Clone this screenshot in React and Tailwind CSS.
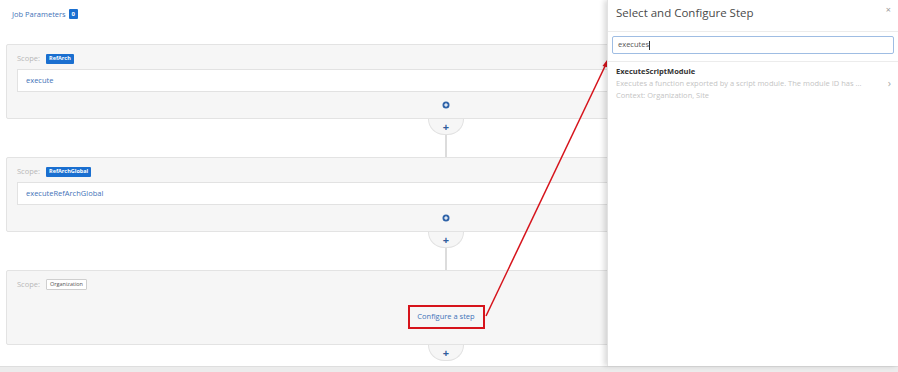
import React from "react";

const font = { fontFamily: '"Open Sans", "Noto Sans", sans-serif' };

function CirclePlus() {
  return (
    <svg width="8" height="8" viewBox="0 0 8 8">
      <circle cx="4" cy="4" r="3.5" fill="#2f63a8" />
      <rect x="2.2" y="3.4" width="3.6" height="1.2" fill="#fff" />
      <rect x="3.4" y="2.2" width="1.2" height="3.6" fill="#fff" />
    </svg>
  );
}

function Tab() {
  return (
    <div className="flex flex-col items-center">
      <div className="w-[36px] h-[16px] rounded-b-[18px] bg-[#f6f6f6] border border-t-0 border-[#e2e2e2] flex items-start justify-center pt-[3px] text-[#2f5d9c] text-[11px] leading-[10px] font-bold">
        +
      </div>
    </div>
  );
}

function Line() {
  return <div className="mx-auto w-[2px] h-[22px] bg-[#dcdcdc]" />;
}

function Card({ scope, outlined, step }) {
  return (
    <div className="h-[75px] bg-[#f6f6f6] border border-[#e3e3e3] rounded-[2px] px-[10px] pt-[8px] flex flex-col">
      <div className="flex items-center gap-[6px] h-[11px]">
        <span className="text-[7.5px] text-[#b8b8b8]">Scope:</span>
        {outlined ? (
          <span className="h-[11px] px-[3px] bg-white border border-[#cfcfcf] rounded-[1px] text-[5.5px] text-[#555] flex items-center">
            {scope}
          </span>
        ) : (
          <span className="h-[10px] px-[3px] bg-[#1a6fd0] rounded-[1px] text-[5.5px] font-bold text-white flex items-center">
            {scope}
          </span>
        )}
      </div>
      {step ? (
        <>
          <div className="mt-[5px] h-[23px] bg-white border border-[#e2e2e2] flex items-center pl-[8px] text-[7.5px] text-[#3f73b8]">
            {step}
          </div>
          <div className="flex-1 flex items-center justify-center">
            <CirclePlus />
          </div>
        </>
      ) : (
        <div className="flex-1 flex items-center justify-center">
          <div className="border-2 border-[#d6131b] w-[77px] h-[24px] flex items-center justify-center text-[7.5px] text-[#3f73b8]">
            Configure a step
          </div>
        </div>
      )}
    </div>
  );
}

export default function App() {
  return (
    <div className="relative w-[898px] h-[372px] bg-white overflow-hidden" style={font}>
      <div className="w-[880px] pl-[6px] box-content">
        <div className="h-[44px] pl-[6px] pt-[9px] flex items-start gap-[3px]">
          <span className="text-[7.5px] text-[#3f73b8] leading-[10px]">Job Parameters</span>
          <span className="w-[9px] h-[10px] bg-[#1a6fd0] rounded-[1px] text-white text-[6px] font-bold flex items-center justify-center">
            0
          </span>
        </div>
        <Card scope="RefArch" step="execute" />
        <Tab />
        <Line />
        <Card scope="RefArchGlobal" step="executeRefArchGlobal" />
        <Tab />
        <Line />
        <Card scope="Organization" outlined />
        <Tab />
      </div>
      <div className="absolute left-0 right-0 bottom-0 h-[6px] bg-[#ececec] border-t border-[#dedede]" />

      <svg className="absolute left-0 top-0 pointer-events-none" width="898" height="372">
        <line x1="486" y1="316" x2="607" y2="62" stroke="#d6131b" strokeWidth="1.5" />
        <polygon points="610,56 602.5,66 610,68" fill="#d6131b" />
      </svg>

      <div className="absolute right-0 top-0 w-[291px] h-[366px] bg-white shadow-[-3px_0_5px_rgba(0,0,0,0.14)] border-l border-[#e2e2e2] flex flex-col">
        <div className="h-[32px] flex items-start justify-between pl-[8px] pr-[7px] pt-[4px] border-b border-[#ececec]">
          <span className="text-[11.5px] text-[#4a4a4a] leading-[18px]">Select and Configure Step</span>
          <span className="text-[9px] text-[#9a9a9a] leading-[12px]">×</span>
        </div>
        <div className="px-[4px] pt-[4px] pb-[7px] border-b border-[#ececec]">
          <div className="h-[18px] border border-[#9fbde3] rounded-[2px] flex items-center pl-[5px] text-[7.5px] text-[#555]">
            executes<span className="w-px h-[9px] bg-[#333] inline-block" />
          </div>
        </div>
        <div className="pl-[8px] pr-[7px] pt-[4px] flex items-center">
          <div className="flex-1 flex flex-col gap-[2px]">
            <span className="text-[7.5px] font-bold text-[#333] leading-[10px]">ExecuteScriptModule</span>
            <span className="text-[7.5px] text-[#c4c4c4] leading-[10px]">
              Executes a function exported by a script module. The module ID has ...
            </span>
            <span className="text-[7.5px] text-[#c4c4c4] leading-[10px]">Context: Organization, Site</span>
          </div>
          <span className="text-[11px] text-[#aaa]">›</span>
        </div>
      </div>
    </div>
  );
}
